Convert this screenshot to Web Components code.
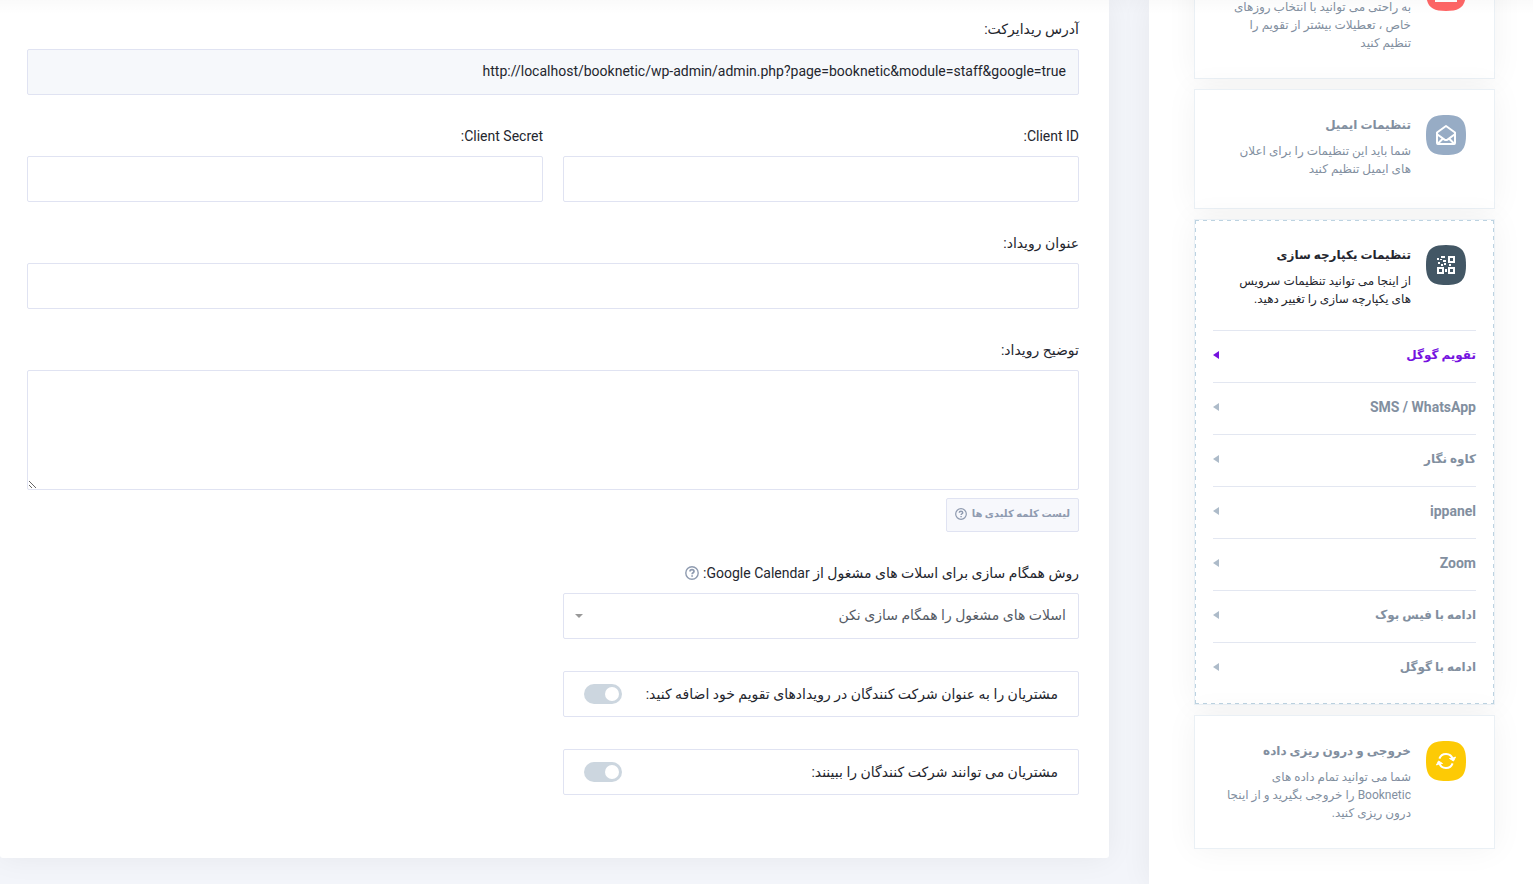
<!DOCTYPE html>
<html lang="fa" dir="rtl">
<head>
<meta charset="utf-8">
<meta name="viewport" content="width=device-width, initial-scale=1">
<title>تنظیمات</title>
<style>
html { height: 100%; }
body {
  margin: 0;
  min-height: 100%;
  background: #f3f5fa;
  color: #24262e;
  font-family: Roboto, "DejaVu Sans", sans-serif;
  font-size: 14px;
  line-height: 20px;
}
</style>
</head>
<body>
<settings-page>
  <settings-menu slot="menu">
    <menu-card color="#ff6666" icon="calendar">به راحتی می توانید با انتخاب روزهای خاص ، تعطیلات بیشتر از تقویم را تنظیم کنید</menu-card>
    <menu-card color="#97acc5" icon="mail" heading="تنظیمات ایمیل">شما باید این تنظیمات را برای اعلان های ایمیل تنظیم کنید</menu-card>
    <menu-card color="#435765" icon="qr" heading="تنظیمات یکپارچه سازی" active>از اینجا می توانید تنظیمات سرویس های یکپارچه سازی را تغییر دهید.
      <menu-link slot="links" current>تقویم گوگل</menu-link>
      <menu-link slot="links">SMS / WhatsApp</menu-link>
      <menu-link slot="links">کاوه نگار</menu-link>
      <menu-link slot="links">ippanel</menu-link>
      <menu-link slot="links">Zoom</menu-link>
      <menu-link slot="links">ادامه با فیس بوک</menu-link>
      <menu-link slot="links">ادامه با گوگل</menu-link>
    </menu-card>
    <menu-card color="#fdca05" icon="sync" heading="خروجی و درون ریزی داده">شما می توانید تمام داده های Booknetic را خروجی بگیرید و از اینجا درون ریزی کنید.</menu-card>
  </settings-menu>
  <form-panel>
    <text-field wide label="آدرس ریدایرکت:" value="http://localhost/booknetic/wp-admin/admin.php?page=booknetic&amp;module=staff&amp;google=true" readonly></text-field>
    <text-field label="Client ID:"></text-field>
    <text-field label="Client Secret:"></text-field>
    <text-field wide label="عنوان رویداد:"></text-field>
    <text-field wide multiline label="توضیح رویداد:"><keyword-button slot="after">لیست کلمه کلیدی ها</keyword-button></text-field>
    <select-field label="روش همگام سازی برای اسلات های مشغول از Google Calendar:" option="اسلات های مشغول را همگام سازی نکن"></select-field>
    <toggle-field label="مشتریان را به عنوان شرکت کنندگان در رویدادهای تقویم خود اضافه کنید:"></toggle-field>
    <toggle-field label="مشتریان می توانند شرکت کنندگان را ببینند:"></toggle-field>
  </form-panel>
</settings-page>

<script>
const HELP = size => `<svg width="${size}" height="${size}" viewBox="0 0 14 14" fill="none" stroke="#8f9bb0" aria-hidden="true"><circle cx="7" cy="7" r="6.2" stroke-width="1.4"/><path d="M5 5.6C5 4.3 5.9 3.7 7 3.7s2 .7 2 1.7C9 6.7 7.1 6.8 7.1 8.2" stroke-width="1.7"/><path d="M7.1 9.2v1.6" stroke-width="1.7"/></svg>`;

const ICONS = {
  calendar: `<path d="M10 12h20v18H10z" fill="none" stroke="#fff" stroke-width="2"/><path d="M10 17h20" stroke="#fff" stroke-width="2"/>`,
  mail: `<g fill="none" stroke="#fff" stroke-width="2" stroke-linejoin="round" stroke-linecap="round"><path d="M11 17.5 20 11l9 6.5V28q0 1-1 1H12q-1 0-1-1z"/><path d="M11.5 19.5 18.5 24.6q1.5 1 3 0L28.500 19.500M12 28.500 17 23.500M28 28.500 23 23.500"/></g>`,
  qr: `<g fill="none" stroke="#fff" stroke-width="2"><path d="M23 12h5v5h-5zM12 23h5v5h-5zM23 23h5v5h-5z"/></g><path fill="#fff" d="M11 13h2v2h-2zM15 11h4v2h-4zM14 14h2v1h-2zM17 15h3v2h-3zM12 17h2v2h-2zM15 19h2v2h-2zM18 18h2v2h-2zM23 19h2v2h-2zM19 24h2v3h-2z"/>`,
  sync: `<g fill="none" stroke="#fff" stroke-width="2"><path d="M13.400 17.600A7 7 0 0 1 26.700 18"/><path d="M26.600 22.400A7 7 0 0 1 13.300 22"/></g><path fill="#fff" stroke="#fff" stroke-linejoin="round" d="M23.500 17.500 27 17 29.500 16 27.500 20zM16.500 22.500 13 23 10.500 24 12.500 20z"/>`
};

class Base extends HTMLElement {
  constructor() {
    super();
    this.attachShadow({ mode: "open" });
  }
  connectedCallback() {
    const t = document.createElement("template");
    t.innerHTML = `<style>*{box-sizing:border-box}:host{box-sizing:border-box;display:block}</style>` + this.view();
    this.shadowRoot.replaceChildren(t.content.cloneNode(true));
  }
  attr(name) {
    return (this.getAttribute(name) || "").replace(/&/g, "&amp;").replace(/"/g, "&quot;");
  }
}

const FIELD_CSS = `
  :host([wide]) { grid-column: 1 / -1; }
  label { display: block; line-height: 18px; margin-bottom: 11px; white-space: nowrap; }
  input, textarea, select {
    display: block; width: 100%; height: 46px; margin: 0; padding: 0 12px;
    border: 1px solid #e0e3f2; border-radius: 2px; background: #fff;
    color: inherit; font: inherit; outline: 0;
  }
  input[readonly] { background: #f6f8fb; padding-bottom: 2px; }
  textarea { height: 120px; resize: vertical; }
  select { appearance: none; color: #555b65; padding-bottom: 2px; }
`;
const persian = s => /[\u0600-\u06ff]/.test(s) ? "fa" : "";

customElements.define("settings-page", class extends Base {
  view() {
    return `<style>
      :host { display: grid; grid-template-columns: 384px minmax(0, 1fr); min-height: 100vh; position: relative; overflow: hidden; }
      aside { background: #fff; box-shadow: 0 0 30px rgba(0,0,0,.06); }
      main { padding: 0 40px 26px 0; }
      .top-shade { position: absolute; inset: 0 0 auto; height: 14px; background: linear-gradient(rgba(0,0,0,.02), transparent); pointer-events: none; }
    </style><aside><slot name="menu"></slot></aside><main><slot></slot></main><div class="top-shade"></div>`;
  }
});

customElements.define("settings-menu", class extends Base {
  view() {
    return `<style>
      :host { height: 100vh; min-height: 100%; overflow: hidden; }
      nav { display: flex; flex-direction: column; gap: 10px; margin-top: -55px; padding: 0 38px 36px 45px; }
    </style><nav><slot></slot></nav>`;
  }
});

customElements.define("menu-card", class extends Base {
  view() {
    return `<style>
      :host { min-height: 120px; border: 1px solid #eaf0f5; background: #fff; color: #828f9f; box-shadow: 0 0 30px rgba(0,0,0,.05); }
      .body { padding: 25px 28px 26px 30px; display: flex; gap: 15px; }
      .body > svg { flex: none; }
      .copy { min-width: 0; }
      h2 { min-height: 20px; margin: 0 0 7px; font-size: 12px; line-height: 20px; font-weight: 700; white-space: nowrap; }
      p { margin: 0; font-size: 12px; line-height: 18px; }
      :host([active]) { color: #24262e; }
      :host([active]) .frame {
        --h: repeating-linear-gradient(90deg, #bdd3e1 0 4px, transparent 4px 8px);
        --v: repeating-linear-gradient(#bdd3e1 0 4px, transparent 4px 8px);
        padding-bottom: 10px;
        background: var(--h) top / 100% 1px no-repeat, var(--h) bottom / 100% 1px no-repeat, var(--v) left / 1px 100% no-repeat, var(--v) right / 1px 100% no-repeat;
      }
      :host([active]) .body { padding-bottom: 22px; }
      .links { display: block; margin: 0 18px; }
    </style>
    <div class="frame">
      <div class="body">
        <svg width="40" height="40" viewBox="0 0 40 40" aria-hidden="true"><path fill="${this.attr("color")}" d="M20 0C35 0 40 5 40 20S35 40 20 40 0 35 0 20 5 0 20 0z"/>${ICONS[this.attr("icon")]}</svg>
        <div class="copy"><h2>${this.attr("heading")}</h2><p><slot></slot></p></div>
      </div>
      <div class="links"><slot name="links"></slot></div>
    </div>`;
  }
});

customElements.define("menu-link", class extends Base {
  view() {
    return `<style>
      :host { border-top: 1px solid #e3e7f1; color: #828f9f; --arrow: #adbbc9; }
      :host([current]) { color: #7512df; --arrow: #7512df; }
      a { display: flex; align-items: center; justify-content: space-between; height: 51px; padding-bottom: 4px; color: inherit; text-decoration: none; font-weight: 700; }
      a.fa { font-size: 12px; }
      svg { fill: var(--arrow); }
    </style><a class="${persian(this.textContent)}" href="#"><slot></slot><svg width="6" height="8" viewBox="0 0 6 8" aria-hidden="true"><path d="M6 0v8L0 4z"/></svg></a>`;
  }
});

customElements.define("form-panel", class extends Base {
  view() {
    return `<style>
      :host { display: grid; grid-template-columns: 1fr 1fr; gap: 32px 20px; padding: 20px 30px 63px 27px; background: #fff; border-radius: 0 0 3px 3px; box-shadow: 0 0 30px rgba(0,0,0,.06); }
    </style><slot></slot>`;
  }
});

customElements.define("text-field", class extends Base {
  view() {
    const control = this.hasAttribute("multiline")
      ? `<textarea id="f"></textarea>`
      : `<input id="f" type="text" value="${this.attr("value")}"${this.hasAttribute("readonly") ? " readonly" : ""}>`;
    return `<style>${FIELD_CSS}</style><label for="f">${this.attr("label")}</label>${control}<slot name="after"></slot>`;
  }
});

customElements.define("keyword-button", class extends Base {
  view() {
    return `<style>
      :host { margin-top: 8px; }
      button { display: flex; align-items: center; gap: 5px; height: 34px; margin: 0; padding: 0 8px 2px; border: 1px solid #e0e3f2; border-radius: 2px; background: #f7f8fc; color: #8f9bb0; font: inherit; font-size: 10px; font-weight: 700; white-space: nowrap; }
    </style><button type="button"><slot></slot>${HELP(12)}</button>`;
  }
});

customElements.define("select-field", class extends Base {
  view() {
    return `<style>${FIELD_CSS}
      :host { grid-column: 1; }
      .caption { display: flex; gap: 4px; }
      .caption svg { margin-top: 2px; }
      .box { display: grid; align-items: center; }
      .box > * { grid-area: 1 / 1; }
      .box > svg { justify-self: end; margin-left: 12px; fill: #999; pointer-events: none; }
    </style>
    <div class="caption"><label for="f">${this.attr("label")}</label>${HELP(14)}</div>
    <div class="box"><select id="f"><option>${this.attr("option")}</option></select><svg width="8" height="4" viewBox="0 0 8 4" aria-hidden="true"><path d="M0 0h8L4 4z"/></svg></div>`;
  }
});

customElements.define("toggle-field", class extends Base {
  view() {
    return `<style>
      :host { grid-column: 1; display: flex; align-items: center; justify-content: space-between; height: 46px; padding: 0 20px; border: 1px solid #e0e3f2; border-radius: 2px; }
      label { white-space: nowrap; }
      input { appearance: none; display: flex; flex: none; align-items: center; width: 38px; height: 20px; margin: 0; padding: 0 3px; border-radius: 10px; background: #ccd6df; }
      input::before { content: ""; width: 14px; height: 14px; border-radius: 50%; background: #fff; }
    </style><label for="f">${this.attr("label")}</label><input id="f" type="checkbox" role="switch">`;
  }
});
</script>
</body>
</html>
